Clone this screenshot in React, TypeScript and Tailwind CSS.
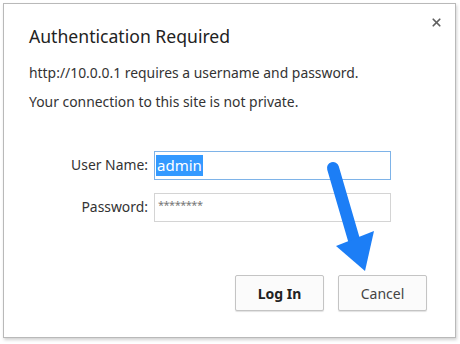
import { X } from "lucide-react";

function Arrow() {
  return (
    <svg
      className="absolute left-0 top-0 pointer-events-none"
      width={460}
      height={344}
      viewBox="0 0 460 344"
    >
      <line x1={333} y1={168} x2={354} y2={240} stroke="#1c7ef6" strokeWidth={12} strokeLinecap="round" />
      <polygon points="336,246 374,231 365,271" fill="#1c7ef6" />
    </svg>
  );
}

export default function App() {
  return (
    <div className="relative w-[460px] h-[344px] bg-white pt-[3px] pl-[3px] font-['Noto_Sans',sans-serif]">
      <div className="relative w-[453px] h-[335px] bg-white border border-[#b9b9b9] shadow-[1px_2px_3px_rgba(0,0,0,0.18)] flex flex-col">
        <button className="absolute right-[12px] top-[12px] text-[#5f5f5f]">
          <X size={13} strokeWidth={3.2} />
        </button>

        <h1 className="pl-[25px] pt-[19px] text-[17.6px] leading-[26px] text-[#222]">
          Authentication Required
        </h1>
        <p className="pl-[25px] pt-[14px] text-[13.9px] leading-[20px] text-[#333]">
          http://10.0.0.1 requires a username and password.
        </p>
        <p className="pl-[25px] pt-[9px] text-[13.9px] leading-[20px] text-[#333]">
          Your connection to this site is not private.
        </p>

        <div className="pt-[39px] flex flex-col gap-[13px] text-[13.9px] text-[#333]">
          <div className="flex items-center">
            <label className="w-[150px] text-right pr-[6px]">User Name:</label>
            <div className="w-[237px] h-[29px] border border-[#7eb3e8] flex items-center px-[1px]">
              <span className="bg-[#3399ff] text-white text-[15px] leading-[21px] px-[1px]">admin</span>
            </div>
          </div>
          <div className="flex items-center">
            <label className="w-[150px] text-right pr-[6px]">Password:</label>
            <div className="w-[237px] h-[29px] border border-[#d4d4d4] flex items-start pt-[3px] px-[3px] text-[#777] text-[11px] tracking-[-0.5px]">
              ********
            </div>
          </div>
        </div>

        <div className="mt-auto mb-[26px] flex justify-end gap-[14px] pr-[28px]">
          <button className="w-[89px] h-[36px] border border-[#c4c4c4] bg-[#fbfbfb] rounded-[2px] shadow-[0_1px_1px_rgba(0,0,0,0.12)] text-[14px] font-bold text-[#222]">
            Log In
          </button>
          <button className="w-[89px] h-[36px] border border-[#c4c4c4] bg-[#fbfbfb] rounded-[2px] shadow-[0_1px_1px_rgba(0,0,0,0.12)] text-[14px] text-[#444]">
            Cancel
          </button>
        </div>
      </div>
      <Arrow />
    </div>
  );
}
